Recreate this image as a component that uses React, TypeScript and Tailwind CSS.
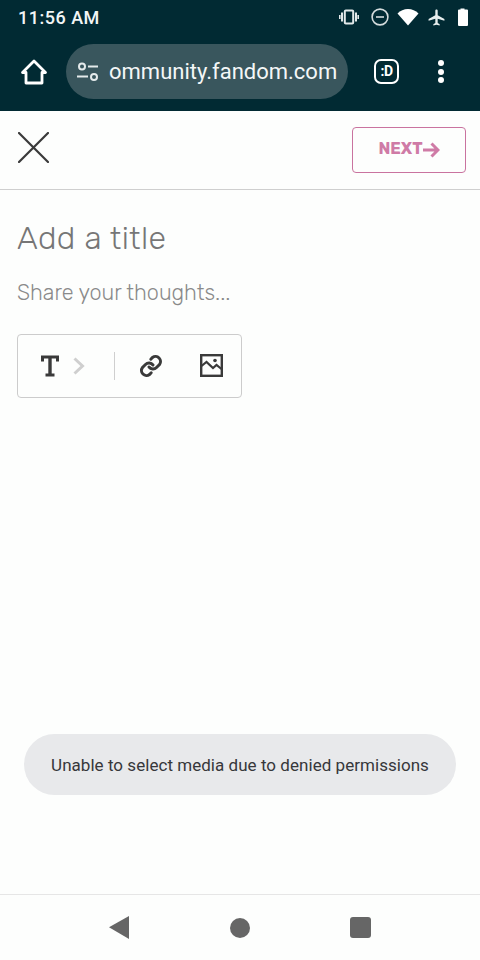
const font = { fontFamily: "Roboto, sans-serif" };
const rubik = { fontFamily: "Rubik, Inter, sans-serif" };

function StatusIcons() {
  return (
    <div className="flex items-center text-white">
      {/* vibrate */}
      <svg width="20" height="16" viewBox="0 0 20 16" className="mr-[12px]" fill="none" stroke="#e3e9ea">
        <rect x="5.800" y="1.400" width="8.400" height="13.200" rx="1" strokeWidth="2" />
        <path d="M3 3.500v9M17 3.500v9" strokeWidth="2" />
        <path d="M.8 6v4M19.2 6v4" strokeWidth="1.600" />
      </svg>
      {/* do not disturb */}
      <svg width="18" height="18" viewBox="0 0 18 18" className="mr-[8px]" fill="none" stroke="#d5dcdd" strokeWidth="1.600">
        <circle cx="9" cy="9" r="7.900" />
        <path d="M5 9h8" />
      </svg>
      {/* wifi */}
      <svg width="22" height="18" viewBox="0 0 22 18" className="mr-[8px]">
        <path d="M0.5 5.500C3.400 2.700 7 1 11 1s7.600 1.700 10.500 4.500L11 17.500z" fill="#fff" />
      </svg>
      {/* airplane */}
      <svg width="19" height="19" viewBox="0 0 24 24" className="mr-[11px]" fill="#e8eeee">
        <path d="M22 16v-2l-8.500-5V3.500C13.500 2.670 12.830 2 12 2s-1.500.67-1.500 1.500V9L2 14v2l8.500-2.500V19L8 20.500V22l4-1 4 1v-1.500L13.500 19v-5.500z" />
      </svg>
      {/* battery */}
      <svg width="12" height="18" viewBox="0 0 12 18" className="mr-[7px]">
        <path d="M3.500 1.500V.5h4v1H10a1 1 0 0 1 1 1V17a1 1 0 0 1-1 1H2a1 1 0 0 1-1-1V2.500a1 1 0 0 1 1-1z" fill="#fff" />
      </svg>
    </div>
  );
}

function BrowserBar() {
  return (
    <div className="h-[111px] bg-[#012a33] text-white shrink-0 border-b border-[#012a33]">
      <div className="flex h-[34px] items-center justify-between pl-[18px] pr-[4px]">
        <span className="text-[18px] font-medium tracking-[0.5px] text-[#f2f5f5]" style={font}>11:56 AM</span>
        <StatusIcons />
      </div>
      <div className="flex items-center h-[55px] mt-[10px]">
        <svg width="28" height="28" viewBox="0 0 28 28" className="ml-[20px] mr-[18px]" fill="none" stroke="#fff" strokeWidth="2.800" strokeLinejoin="round" strokeLinecap="round">
          <path d="M2.500 14.500 14 3l11.500 11.500H22v10.500H6V14.500z" />
        </svg>
        <div className="flex items-center w-[282px] h-[55px] rounded-full bg-[#39565d] pl-[11px]">
          <svg width="22" height="22" viewBox="0 0 22 22" fill="none" stroke="#e4eaeb" strokeWidth="2">
            <circle cx="5" cy="5.500" r="3" />
            <path d="M11 5.500h10" />
            <path d="M0 15.500h11" />
            <circle cx="17" cy="16" r="3" />
          </svg>
          <span className="ml-[10px] text-[22px] text-[#f4f7f7] whitespace-nowrap" style={font}>ommunity.fandom.com</span>
        </div>
        <div className="ml-[26px] flex h-[25px] w-[25px] items-center justify-center rounded-[7px] border-[2.500px] border-white text-[14px] font-bold tracking-[-0.5px]" style={font}>:D</div>
        <div className="ml-[39px] flex flex-col gap-[2.500px]">
          <span className="h-[6px] w-[6px] rounded-full bg-white" />
          <span className="h-[6px] w-[6px] rounded-full bg-white" />
          <span className="h-[6px] w-[6px] rounded-full bg-white" />
        </div>
      </div>
    </div>
  );
}

function Header() {
  return (
    <div className="flex h-[79px] items-center justify-between border-b border-[#cfcfcf] pl-[18px] pr-[14px] shrink-0">
      <svg width="31" height="31" viewBox="0 0 31 31" fill="none" stroke="#3a3a3a" strokeWidth="2.200" strokeLinecap="round" className="mb-[6px]">
        <path d="M1 1l29 29M30 1 1 30" />
      </svg>
      <button className="flex h-[46px] w-[114px] items-center justify-center rounded-[4px] border border-[#c9739f] pb-[2px] text-[16.500px] font-bold text-[#cf7ba6]" style={rubik}>
        NEXT
        <svg width="17" height="16" viewBox="0 0 17 16" fill="none" stroke="#cf7ba6" strokeWidth="3" className="mt-[1px]">
          <path d="M0 8h15M8.500 1.500 15 8l-6.500 6.500" />
        </svg>
      </button>
    </div>
  );
}

function Toolbar() {
  return (
    <div className="mt-[28px] flex h-[64px] w-[225px] items-center rounded-[4px] border border-[#cccccc]">
      {/* text style icon */}
      <svg width="18" height="22" viewBox="0 0 18 22" fill="none" stroke="#3a3a3a" className="ml-[23px] mb-[1px]">
        <path d="M1.500 6.500V2h15v4.500" strokeWidth="3" />
        <path d="M9 1.500v19" strokeWidth="3.400" />
        <path d="M4.500 20h9" strokeWidth="3" />
      </svg>
      <svg width="12" height="18" viewBox="0 0 12 18" fill="none" stroke="#cfcfcf" strokeWidth="3" className="ml-[14px]">
        <path d="M1.500 1.500 9.500 9l-8 7.500" />
      </svg>
      <span className="ml-[29px] h-[28px] w-px bg-[#cfcfcf]" />
      <svg width="24" height="24" viewBox="0 0 24 24" fill="none" stroke="#3a3a3a" strokeWidth="3" strokeLinecap="round" className="ml-[24px] mb-[1px]">
        <path d="M10 13a5 5 0 0 0 7.500.5l3-3a5 5 0 0 0-7-7l-1.700 1.700" />
        <path d="M14 11a5 5 0 0 0-7.500-.5l-3 3a5 5 0 0 0 7 7l1.700-1.700" />
      </svg>
      <svg width="23" height="23" viewBox="0 0 23 23" fill="none" stroke="#3a3a3a" className="ml-[37px] mb-[1px]">
        <rect x="1.200" y="1.200" width="20.600" height="20.600" strokeWidth="2.400" />
        <path d="M1.500 12 6.500 8l6.500 6 3.500-3 5 4" strokeWidth="2.200" />
        <circle cx="15" cy="6.500" r="1.800" fill="#3a3a3a" stroke="none" />
      </svg>
    </div>
  );
}

function NavBar() {
  return (
    <div className="relative flex h-[66px] items-center border-t border-[#e6e6e6] shrink-0">
      <svg width="22" height="24" viewBox="0 0 22 24" className="ml-[108px] mb-[1px]">
        <path d="M1 12.300 21 1v23z" fill="#666666" />
      </svg>
      <span className="ml-[100px] h-[20px] w-[20px] rounded-full bg-[#666666]" />
      <span className="ml-[100px] h-[21px] w-[21px] rounded-[3px] bg-[#666666]" />
    </div>
  );
}

export default function App() {
  return (
    <div className="relative flex h-[960px] w-[480px] flex-col overflow-hidden bg-[#fdfefd]" style={font}>
      <BrowserBar />
      <Header />
      <main className="flex-1 pl-[17px] pt-[28px]">
        <h1 className="text-[32px] font-light leading-[40px] text-[#767676] tracking-[0.35px]" style={rubik}>Add a title</h1>
        <p className="mt-[22px] text-[21.600px] font-light leading-[26px] text-[#8a8a8a]" style={rubik}>Share your thoughts...</p>
        <Toolbar />
      </main>
      <div className="absolute left-[24px] top-[734px] flex h-[61px] w-[432px] items-center justify-center rounded-full bg-[#e8e9eb] pt-[2px] text-[17px] tracking-[0.04px] text-[#36373a]" style={font}>
        Unable to select media due to denied permissions
      </div>
      <NavBar />
    </div>
  );
}
